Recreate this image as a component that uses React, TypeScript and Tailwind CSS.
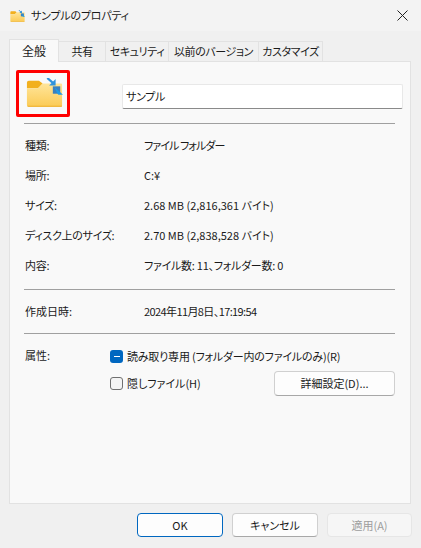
const font = { fontFamily: '"Noto Sans CJK JP", "Noto Sans", sans-serif' };

function FolderIcon({ size }: { size: number }) {
  return (
    <svg width={size} height={size * 0.8} viewBox="0 0 40 32">
      <defs>
        <linearGradient id={`f${size}`} x1="0" y1="0" x2="0" y2="1">
          <stop offset="0" stopColor="#ffe59a" />
          <stop offset="1" stopColor="#fbcb56" />
        </linearGradient>
      </defs>
      <path d="M1 5a2 2 0 0 1 2-2h11l4 3-5 5H1z" fill="#f2b01e" />
      <path d="M1 11h12l5-5h20a1 1 0 0 1 1 1v23a1 1 0 0 1-1 1H3a2 2 0 0 1-2-2z" fill={`url(#f${size})`} />
      <path d="M1 30h38v0a1 1 0 0 1-1 1H3a2 2 0 0 1-2-1z" fill="#eeb02c" />
      <path d="M23 0l7 6" stroke="#2f93dc" strokeWidth="2.4" fill="none" />
      <path d="M32 1v7h-7z" fill="#2f93dc" />
      <rect x="29" y="9" width="8" height="8" fill="#3a80bf" />
      <path d="M31 10l9 8h-5l-1-1z" fill="#1e9be8" />
    </svg>
  );
}

function Row({ label, value, valueClass }: { label: string; value: string; valueClass?: string }) {
  return (
    <div className="flex h-[30px] items-center pl-px">
      <div className="w-[119px] tracking-[-0.3px]">{label}</div>
      <div className={valueClass}>{value}</div>
    </div>
  );
}

function Tab({ label, width, active }: { label: string; width: string; active?: boolean }) {
  return active ? (
    <div className={`${width} relative z-10 -mb-px flex h-[23px] items-center justify-center whitespace-nowrap border border-b-0 border-[#e2e2e2] bg-[#f9f9f9] text-[12px]`}>
      {label}
    </div>
  ) : (
    <div className={`${width} mt-[2px] flex h-[20px] items-center justify-center whitespace-nowrap border-r border-t border-[#e2e2e2] tracking-[-0.4px]`}>
      {label}
    </div>
  );
}

export default function App() {
  return (
    <div style={font} className="relative flex h-[548px] w-[421px] flex-col overflow-hidden bg-[#f0f0f0] text-[11px] leading-none text-[#1a1a1a] [font-feature-settings:'palt']">
      <div className="flex h-[31px] shrink-0 items-center bg-[#f3f3f3] pl-[10px] pr-[13px]">
        <FolderIcon size={15} />
        <span className="ml-[6px] flex-1 text-[11px] tracking-[-0.2px]">サンプルのプロパティ</span>
        <svg width="11" height="11" viewBox="0 0 11 11">
          <path d="M0.5 0.5l10 10M10.5 0.5l-10 10" stroke="#222" strokeWidth="1" />
        </svg>
      </div>

      <div className="flex h-[30px] shrink-0 items-end pl-[9px]">
        <Tab label="全般" width="w-[50px]" active />
        <Tab label="共有" width="w-[47px]" />
        <Tab label="セキュリティ" width="w-[63px]" />
        <Tab label="以前のバージョン" width="w-[90px]" />
        <Tab label="カスタマイズ" width="w-[64px]" />
      </div>

      <div className="ml-[9px] mr-[10px] flex h-[443px] shrink-0 flex-col border border-[#e2e2e2] bg-[#f9f9f9] pl-[14px] pr-[15px]">
        <div className="flex h-[61px] shrink-0 items-center">
          <div className="ml-[2px] w-[96px]">
            <FolderIcon size={37} />
          </div>
          <div className="mt-[7px] flex h-[25px] flex-1 -mr-[8px] items-center rounded-[2px] border border-[#e8e8e8] border-b-[#8a8a8a] bg-white pl-[3px] text-[11px] tracking-[-0.3px]">
            サンプル
          </div>
        </div>
        <div className="h-px shrink-0 bg-[#a0a0a0]" />

        <div className="pt-[6px]">
          <Row label="種類:" value="ファイル フォルダー" valueClass="tracking-[-0.9px]" />
          <Row label="場所:" value="C:¥" />
          <Row label="サイズ:" value="2.68 MB (2,816,361 バイト)" />
          <Row label="ディスク上のサイズ:" value="2.70 MB (2,838,528 バイト)" />
          <Row label="内容:" value="ファイル数: 11、フォルダー数: 0" valueClass="tracking-[-0.25px]" />
        </div>
        <div className="mt-[9px] h-px shrink-0 bg-[#a0a0a0]" />

        <div className="flex h-[43px] items-center pl-px">
          <div className="w-[119px]">作成日時:</div>
          <div className="tracking-[-0.6px]">2024年11月8日、17:19:54</div>
        </div>
        <div className="h-px shrink-0 bg-[#a0a0a0]" />

        <div className="flex pt-[15px] pl-px">
          <div className="w-[85px] pt-[1px]">属性:</div>
          <div className="flex flex-1 flex-col">
            <div className="flex h-[14px] items-center gap-[4px]">
              <span className="flex h-[13px] w-[13px] items-center justify-center rounded-[3px] bg-[#0067c0]">
                <span className="h-px w-[6px] bg-white" />
              </span>
              <span className="tracking-[-0.2px]">読み取り専用 (フォルダー内のファイルのみ)(R)</span>
            </div>
            <div className="mt-[8px] flex items-center">
              <div className="flex flex-1 items-center gap-[4px] pb-[1px]">
                <span className="h-[13px] w-[13px] rounded-[3px] border border-[#707070] bg-[#f4f4f4]" />
                <span>隠しファイル(H)</span>
              </div>
              <div className="flex h-[25px] w-[121px] items-center justify-center rounded-[4px] border border-[#d0d0d0] border-b-[#a8a8a8] bg-[#fdfdfd]">
                詳細設定(D)...
              </div>
            </div>
          </div>
        </div>
      </div>

      <div className="flex flex-1 justify-end gap-[9px] pr-[9px] pt-[9px]">
        <div className="flex h-[24px] w-[86px] items-center justify-center rounded-[4px] border border-[#0067c0] bg-[#fdfdfd]">OK</div>
        <div className="flex h-[24px] w-[86px] items-center justify-center rounded-[4px] border border-[#d0d0d0] border-b-[#a8a8a8] bg-[#fdfdfd]">キャンセル</div>
        <div className="flex h-[24px] w-[85px] items-center justify-center rounded-[4px] border border-[#e6e6e6] bg-[#f6f6f6] text-[#9d9d9d]">適用(A)</div>
      </div>

      <div className="absolute left-[16px] top-[70px] h-[47px] w-[54px] rounded-[2px] border-[3px] border-[#ff0000]" />
    </div>
  );
}
